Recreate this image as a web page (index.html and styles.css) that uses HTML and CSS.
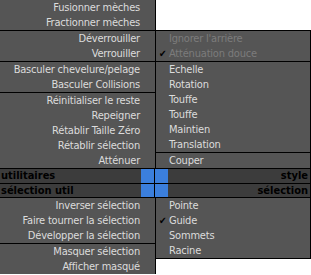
FILE: index.html
```html
<!DOCTYPE html>
<html lang="fr">
<head>
    <meta charset="UTF-8">
    <title>Menu quadruple</title>
    <link rel="stylesheet" href="styles.css">
</head>
<body>
    <div class="quad-menu">
        <!-- quadrant haut gauche -->
        <div class="quad quad-tl">
            <div class="group">
                <div class="item">Fusionner mèches</div>
                <div class="item">Fractionner mèches</div>
            </div>
            <div class="group">
                <div class="item">Déverrouiller</div>
                <div class="item">Verrouiller</div>
            </div>
            <div class="group">
                <div class="item">Basculer chevelure/pelage</div>
                <div class="item">Basculer Collisions</div>
            </div>
            <div class="group">
                <div class="item">Réinitialiser le reste</div>
                <div class="item">Repeigner</div>
                <div class="item">Rétablir Taille Zéro</div>
                <div class="item">Rétablir sélection</div>
                <div class="item">Atténuer</div>
            </div>
        </div>

        <!-- quadrant haut droit -->
        <div class="quad quad-tr">
            <div class="group">
                <div class="item disabled">Ignorer l'arrière</div>
                <div class="item disabled checked">Atténuation douce</div>
            </div>
            <div class="group">
                <div class="item">Echelle</div>
                <div class="item">Rotation</div>
                <div class="item">Touffe</div>
                <div class="item">Touffe</div>
                <div class="item">Maintien</div>
                <div class="item">Translation</div>
            </div>
            <div class="group">
                <div class="item">Couper</div>
            </div>
        </div>

        <!-- barres de titre -->
        <div class="titles">
            <div class="title-row">
                <div class="title title-left">utilitaires</div>
                <div class="swatch"></div>
                <div class="swatch"></div>
                <div class="title title-right">style</div>
            </div>
            <div class="title-row">
                <div class="title title-left">sélection util</div>
                <div class="swatch"></div>
                <div class="swatch"></div>
                <div class="title title-right">sélection</div>
            </div>
        </div>

        <!-- quadrant bas gauche -->
        <div class="quad quad-bl">
            <div class="group">
                <div class="item">Inverser sélection</div>
                <div class="item">Faire tourner la sélection</div>
                <div class="item">Développer la sélection</div>
            </div>
            <div class="group">
                <div class="item">Masquer sélection</div>
                <div class="item">Afficher masqué</div>
            </div>
        </div>

        <!-- quadrant bas droit -->
        <div class="quad quad-br">
            <div class="group">
                <div class="item">Pointe</div>
                <div class="item checked">Guide</div>
                <div class="item">Sommets</div>
                <div class="item">Racine</div>
            </div>
        </div>
    </div>
</body>
</html>
```

FILE: styles.css
```css
* {
    box-sizing: border-box;
    margin: 0;
    padding: 0;
}

body {
    background-color: #ffffff;
    font-family: 'DejaVu Sans', 'Liberation Sans', sans-serif;
    font-stretch: condensed;
    font-size: 11px;
}

.quad-menu {
    display: grid;
    grid-template-columns: 156px 155px;
    grid-template-rows: auto auto auto;
    width: 311px;
}

.quad {
    background-color: #555555;
}
.quad-tl {
    align-self: end;
    border-right: 1px solid #000;
}
.quad-tr {
    align-self: end;
    border-top: 1px solid #000;
    border-right: 1px solid #000;
}
.quad-bl {
    align-self: start;
    border-right: 1px solid #000;
}
.quad-br {
    align-self: start;
    border-right: 1px solid #000;
    border-bottom: 1px solid #000;
}

.group + .group {
    border-top: 1px solid #000;
}

.item {
    height: 15px;
    line-height: 15px;
    color: #dcdcdc;
    letter-spacing: -0.2px;
    white-space: nowrap;
    position: relative;
}
.quad-tl .item,
.quad-bl .item {
    text-align: right;
    padding-right: 15px;
}
.quad-tr .item,
.quad-br .item {
    padding-left: 13px;
}
.item.disabled {
    color: #7c7c7c;
}
.item.checked::before {
    content: "\2714";
    position: absolute;
    left: 3px;
    top: 0;
    color: #000;
    font-size: 10px;
}

/* barres de titre */
.titles {
    grid-column: 1 / 3;
    border-top: 1px solid #000;
    border-bottom: 1px solid #000;
    background-color: #000;
    display: flex;
    flex-direction: column;
    gap: 1px;
}
.title-row {
    display: flex;
    height: 14px;
}
.title-row + .title-row {
    height: 13px;
}
.title {
    flex: 1;
    background-color: #3c3c3c;
    color: #000;
    font-weight: bold;
    line-height: 13px;
    white-space: nowrap;
    overflow: hidden;
}
.title-left {
    padding-left: 1px;
}
.title-right {
    text-align: right;
    padding-right: 2px;
    margin-right: 1px;
}
.swatch {
    width: 13px;
    background-color: #3b7fdd;
}
.swatch + .swatch {
    margin-left: 1px;
}
```
